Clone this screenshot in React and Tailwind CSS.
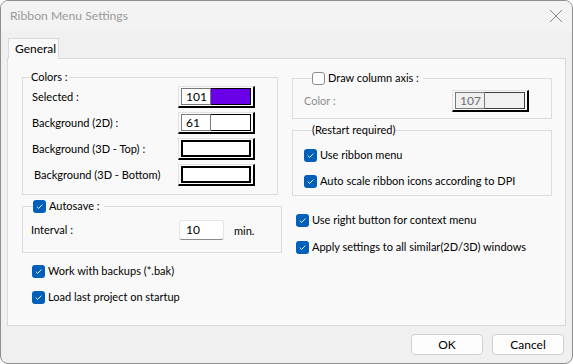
import React from "react";

const font = { fontFamily: 'Lato, "Noto Sans", sans-serif' };

function Check({ checked }) {
    if (!checked) {
        return <span className="inline-block w-[13px] h-[13px] rounded-[3px] border border-[#8c8c8c] bg-white shrink-0" />;
    }
    return (
        <span className="inline-flex items-center justify-center w-[13px] h-[13px] rounded-[3px] bg-[#005fb8] shrink-0">
            <svg width="9" height="9" viewBox="0 0 9 9">
                <path d="M1.8 4.6 L3.7 6.4 L7.3 2.6" fill="none" stroke="#fff" strokeWidth="0.9" />
            </svg>
        </span>
    );
}

function CheckRow({ checked, label, className = "" }) {
    return (
        <div className={"flex items-center h-[16px] gap-[3px] whitespace-nowrap " + className}>
            <Check checked={checked} />
            <span>{label}</span>
        </div>
    );
}

function Swatch({ value, color, disabled }) {
    return (
        <div className="w-[77px] h-[22px] border-t border-l border-t-[#e2e2e2] border-l-[#e2e2e2] border-r-2 border-b-2 border-r-black border-b-black pt-[1px] pl-[2px] pr-[2px] pb-[1px] flex">
            {value !== undefined ? (
                <>
                    <div
                        className={
                            "w-[30px] h-full border border-[#7a7a7a] flex items-center pl-[4px] leading-none text-[12px] " +
                            (disabled ? "bg-[#f0f0f0] text-[#6d6d6d]" : "bg-white text-black")
                        }
                    >
                        {value}
                    </div>
                    <div
                        className={"flex-1 h-full border border-l-0 " + (disabled ? "border-[#3c3c3c]" : "border-black")}
                        style={{ background: color }}
                    />
                </>
            ) : (
                <div className="flex-1 h-full border-2 border-black bg-white" />
            )}
        </div>
    );
}

function ColorRow({ label, value, color, indent }) {
    return (
        <div className="flex items-center h-[22px] whitespace-nowrap">
            <span className={"flex-1 " + (indent ? "pl-[4px]" : "pl-[2px]")}>{label}</span>
            <div className="mr-[22px]">
                <Swatch value={value} color={color} />
            </div>
        </div>
    );
}

export default function App() {
    return (
        <div className="w-[573px] h-[364px] bg-white text-[11px] text-black" style={font}>
            <div className="w-full h-full rounded-[8px] border border-[#8f8f8f] bg-[#f0f0f0] overflow-hidden flex flex-col">
                {/* title bar */}
                <div className="h-[30px] bg-[#f3f3f3] flex items-center justify-between pl-[9px] pr-[8px] shrink-0">
                    <span className="text-[#9a9a9a] text-[12.2px]">Ribbon Menu Settings</span>
                    <svg width="14" height="14" viewBox="0 0 14 14" className="mr-[1px]">
                        <path d="M1 1 L13 13 M13 1 L1 13" stroke="#8a8a8a" strokeWidth="1" />
                    </svg>
                </div>

                {/* tabs */}
                <div className="pt-[7px] px-[6px] flex flex-col flex-1">
                    <div className="flex">
                        <div className="h-[21px] w-[51px] ml-[1px] bg-[#f9f9f9] border border-b-0 border-[#d9d9d9] flex items-center pl-[6px] relative z-10 -mb-[1px] text-[12px]">
                            General
                        </div>
                    </div>
                    <div className="h-[268px] bg-[#f9f9f9] border border-[#d9d9d9] pt-[10px] pl-[14px] pr-[13px] flex gap-[10px]">
                        {/* left column */}
                        <div className="w-[260px] flex flex-col">
                            <fieldset className="w-[256px] h-[126px] border border-[#dcdcdc] px-[7px] pb-[8px]">
                                <legend className="px-[1px] h-[16px] leading-[16px]">Colors :</legend>
                                <div className="flex flex-col gap-[4px] -mr-[7px] mt-[1px]">
                                    <ColorRow label="Selected :" value="101" color="#6a00e8" />
                                    <ColorRow label="Background (2D) :" value="61" color="#ffffff" />
                                    <ColorRow label="Background (3D - Top) :" />
                                    <ColorRow label="Background (3D - Bottom)" indent />
                                </div>
                            </fieldset>

                            <fieldset className="mt-[3px] w-[260px] h-[55px] border border-[#dcdcdc] pl-[8px] pr-[14px]">
                                <legend className="ml-[2px] pr-[4px]">
                                    <CheckRow checked label="Autosave :" />
                                </legend>
                                <div className="flex items-center mt-[6px]">
                                    <span className="w-[148px]">Interval :</span>
                                    <div className="w-[45px] h-[20px] bg-white border border-[#e5e5e5] border-b-[#8a8a8a] rounded-[3px] flex items-center pl-[6px] text-[12px]">
                                        10
                                    </div>
                                    <span className="ml-[10px] mt-[3px]">min.</span>
                                </div>
                            </fieldset>

                            <CheckRow checked label="Work with backups (*.bak)" className="mt-[10px] ml-[10px]" />
                            <CheckRow checked label="Load last project on startup" className="mt-[10px] ml-[10px]" />
                        </div>

                        {/* right column */}
                        <div className="w-[260px] flex flex-col">
                            <fieldset className="w-[260px] h-[49px] border border-[#dcdcdc] pl-[11px] mt-[1px]">
                                <legend className="ml-[8px] pr-[4px]">
                                    <CheckRow label="Draw column axis :" />
                                </legend>
                                <div className="flex items-center mt-[4px]">
                                    <span className="w-[148px] text-[#8e8e8e]">Color :</span>
                                    <Swatch value="107" color="#f0f0f0" disabled />
                                </div>
                            </fieldset>

                            <fieldset className="mt-[3px] w-[260px] h-[74px] border border-[#dcdcdc] pl-[11px]">
                                <legend className="ml-[8px] px-0 h-[16px] leading-[16px]">(Restart required)</legend>
                                <CheckRow checked label="Use ribbon menu" className="mt-[9px]" />
                                <CheckRow checked label="Auto scale ribbon icons according to DPI" className="mt-[10px]" />
                            </fieldset>

                            <CheckRow checked label="Use right button for context menu" className="mt-[16px] ml-[4px]" />
                            <CheckRow checked label="Apply settings to all similar(2D/3D) windows" className="mt-[11px] ml-[4px]" />
                        </div>
                    </div>

                    {/* buttons */}
                    <div className="flex justify-end gap-[9px] pt-[8px] pr-[2px]">
                        <button className="w-[72px] h-[21px] rounded-[4px] border border-[#d0d0d0] bg-[#fdfdfd] leading-none text-[12px]">OK</button>
                        <button className="w-[72px] h-[21px] rounded-[4px] border border-[#d0d0d0] bg-[#fdfdfd] leading-none text-[12px]">Cancel</button>
                    </div>
                </div>
            </div>
        </div>
    );
}
